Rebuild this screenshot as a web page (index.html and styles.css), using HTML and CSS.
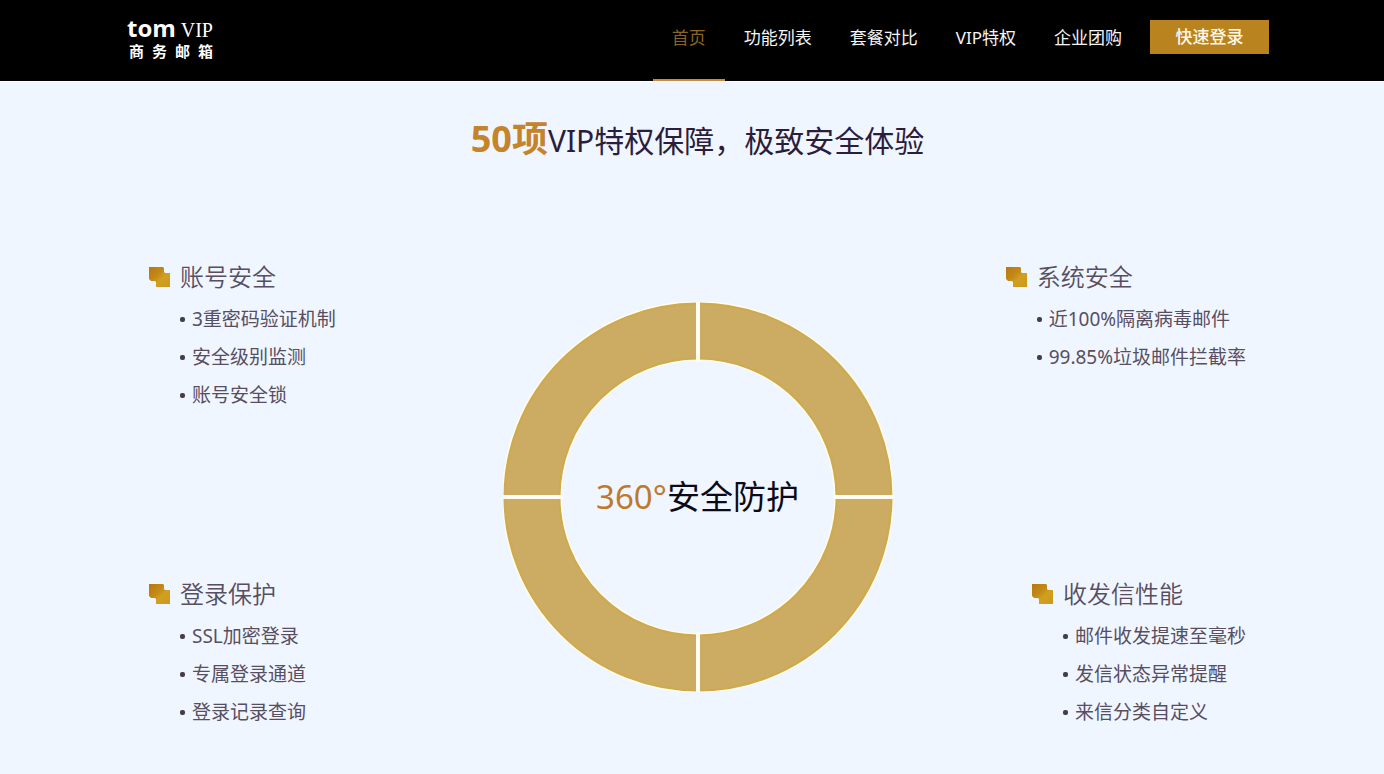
FILE: index.html
```
<!DOCTYPE html>
<html lang="zh-CN">
<head>
<meta charset="utf-8">
<meta name="viewport" content="width=device-width, initial-scale=1">
<title>tom VIP 商务邮箱</title>
<link rel="stylesheet" href="styles.css">
</head>
<body>
<svg class="defs" width="0" height="0" aria-hidden="true">
  <defs>
    <linearGradient id="gold" x1="0" y1="0" x2="1" y2="1">
      <stop offset="0" stop-color="#b9760f"/>
      <stop offset="0.4" stop-color="#c48a16"/>
      <stop offset="0.6" stop-color="#d0a020"/>
      <stop offset="1" stop-color="#cc981c"/>
    </linearGradient>
    <symbol id="squares" viewBox="0 0 22 22">
      <path d="M0 1h14l1 1v4l1 1h5v14H7v-5l-1-1H2l-2-2z" fill="url(#gold)"/>
    </symbol>
  </defs>
</svg>
<header class="site-header">
  <a class="logo" href="#">
    <span class="logo-top"><span class="logo-tom">tom</span><span class="logo-vip">VIP</span></span>
    <span class="logo-sub">商务邮箱</span>
  </a>
  <nav class="nav">
    <a class="nav-link active" href="#">首页</a>
    <a class="nav-link" href="#">功能列表</a>
    <a class="nav-link" href="#">套餐对比</a>
    <a class="nav-link" href="#">VIP特权</a>
    <a class="nav-link" href="#">企业团购</a>
  </nav>
  <button class="login" type="button">快速登录</button>
</header>
<main class="main">
  <h1 class="title"><strong>50项</strong>VIP特权保障，极致安全体验</h1>
  <div class="features">
    <section class="group">
      <h2><svg class="mark" aria-hidden="true"><use href="#squares"/></svg>账号安全</h2>
      <ul><li>3重密码验证机制</li><li>安全级别监测</li><li>账号安全锁</li></ul>
    </section>
    <div class="ring">
      <svg class="ring-art" viewBox="0 0 390 390" aria-hidden="true">
        <circle cx="195" cy="195" r="166" fill="none" stroke="#fffdf0" stroke-width="60"/>
        <circle cx="195" cy="195" r="166" fill="none" stroke="#cfaa4c" stroke-width="57"/>
        <circle cx="195" cy="195" r="166" fill="none" stroke="#ccab63" stroke-width="53"/>
        <path d="M195 0v60M195 330v60M0 195h60M330 195h60" stroke="#fffdf3" stroke-width="4"/>
      </svg>
      <p class="ring-text"><span>360°</span>安全防护</p>
    </div>
    <section class="group right">
      <h2><svg class="mark" aria-hidden="true"><use href="#squares"/></svg>系统安全</h2>
      <ul><li>近100%隔离病毒邮件</li><li>99.85%垃圾邮件拦截率</li></ul>
    </section>
    <section class="group">
      <h2><svg class="mark" aria-hidden="true"><use href="#squares"/></svg>登录保护</h2>
      <ul><li>SSL加密登录</li><li>专属登录通道</li><li>登录记录查询</li></ul>
    </section>
    <section class="group right">
      <h2><svg class="mark" aria-hidden="true"><use href="#squares"/></svg>收发信性能</h2>
      <ul><li>邮件收发提速至毫秒</li><li>发信状态异常提醒</li><li>来信分类自定义</li></ul>
    </section>
  </div>
</main>
</body>
</html>
```
FILE: styles.css
```
* { box-sizing: border-box; }

body {
  margin: 0;
  background: #f0f6ff;
  color: #574e61;
  font-family: "Noto Sans", "Noto Sans CJK SC", sans-serif;
  font-weight: 400;
}

h1, h2, p, ul { margin: 0; padding: 0; font-weight: inherit; }

.defs { position: absolute; }

.site-header {
  display: flex;
  align-items: flex-start;
  padding: 0 115px 0 127px;
  background: #000;
  border-bottom: 1px solid #fff;
}

.logo {
  display: flex;
  flex-direction: column;
  width: 86px;
  padding-top: 16px;
  color: #fff;
  text-decoration: none;
}

.logo-top {
  display: flex;
  justify-content: space-between;
  align-items: baseline;
}

.logo-tom { font: 700 24px/24px "Open Sans", sans-serif; }
.logo-vip { font: 400 20px/24px "Liberation Serif", serif; }

.logo-sub {
  padding-left: 2px;
  font-size: 15px;
  font-weight: 700;
  line-height: 18px;
  text-align-last: justify;
  text-justify: inter-character;
}

.nav {
  display: flex;
  margin-left: auto;
}

.nav-link {
  padding: 0 19px;
  border-bottom: 2px solid transparent;
  color: #f4f4f4;
  font-size: 17px;
  line-height: 76px;
  height: 81px;
  text-decoration: none;
  white-space: nowrap;
}

.nav-link.active {
  color: #8c641c;
  border-color: #c98a3c;
}

.login {
  width: 119px;
  height: 34px;
  margin: 20px 0 0 9px;
  padding: 0;
  border: 0;
  background: #b98420;
  color: #fff8e8;
  font: 500 17px/34px "Noto Sans", "Noto Sans CJK SC", sans-serif;
}

.main { padding: 35px 138px 44px 149px; }

.title {
  color: #2b1d3c;
  font-size: 30px;
  line-height: 44px;
  text-align: center;
}

.title strong {
  color: #c5832a;
  font-size: 36px;
  font-weight: 700;
}

.features {
  display: grid;
  grid-template-columns: 1fr minmax(0, 390px) 1fr;
  row-gap: 161px;
  margin-top: 95px;
}

.group h2 {
  display: flex;
  align-items: center;
  gap: 9px;
  margin-bottom: 4px;
  font-size: 24px;
  font-weight: 350;
  line-height: 38px;
}

.group.right { justify-self: end; }

.mark { width: 22px; height: 22px; }

.group ul {
  padding-left: 31px;
  list-style: none;
}

.group li {
  display: flex;
  align-items: center;
  gap: 7px;
  font-size: 19px;
  line-height: 38px;
  white-space: nowrap;
}

.group li::before {
  content: "";
  width: 5px;
  height: 5px;
  border-radius: 2px;
  background: #453c50;
}

.ring {
  display: grid;
  grid-area: 1 / 2 / 3 / 3;
  place-items: center;
  align-self: start;
  margin-top: 44px;
}

.ring-art, .ring-text { grid-area: 1 / 1; }

.ring-art { width: 100%; }

.ring-text {
  color: #0c0a18;
  font-size: 33px;
  line-height: 44px;
  white-space: nowrap;
}

.ring-text span { color: #bd7a2c; }
```
